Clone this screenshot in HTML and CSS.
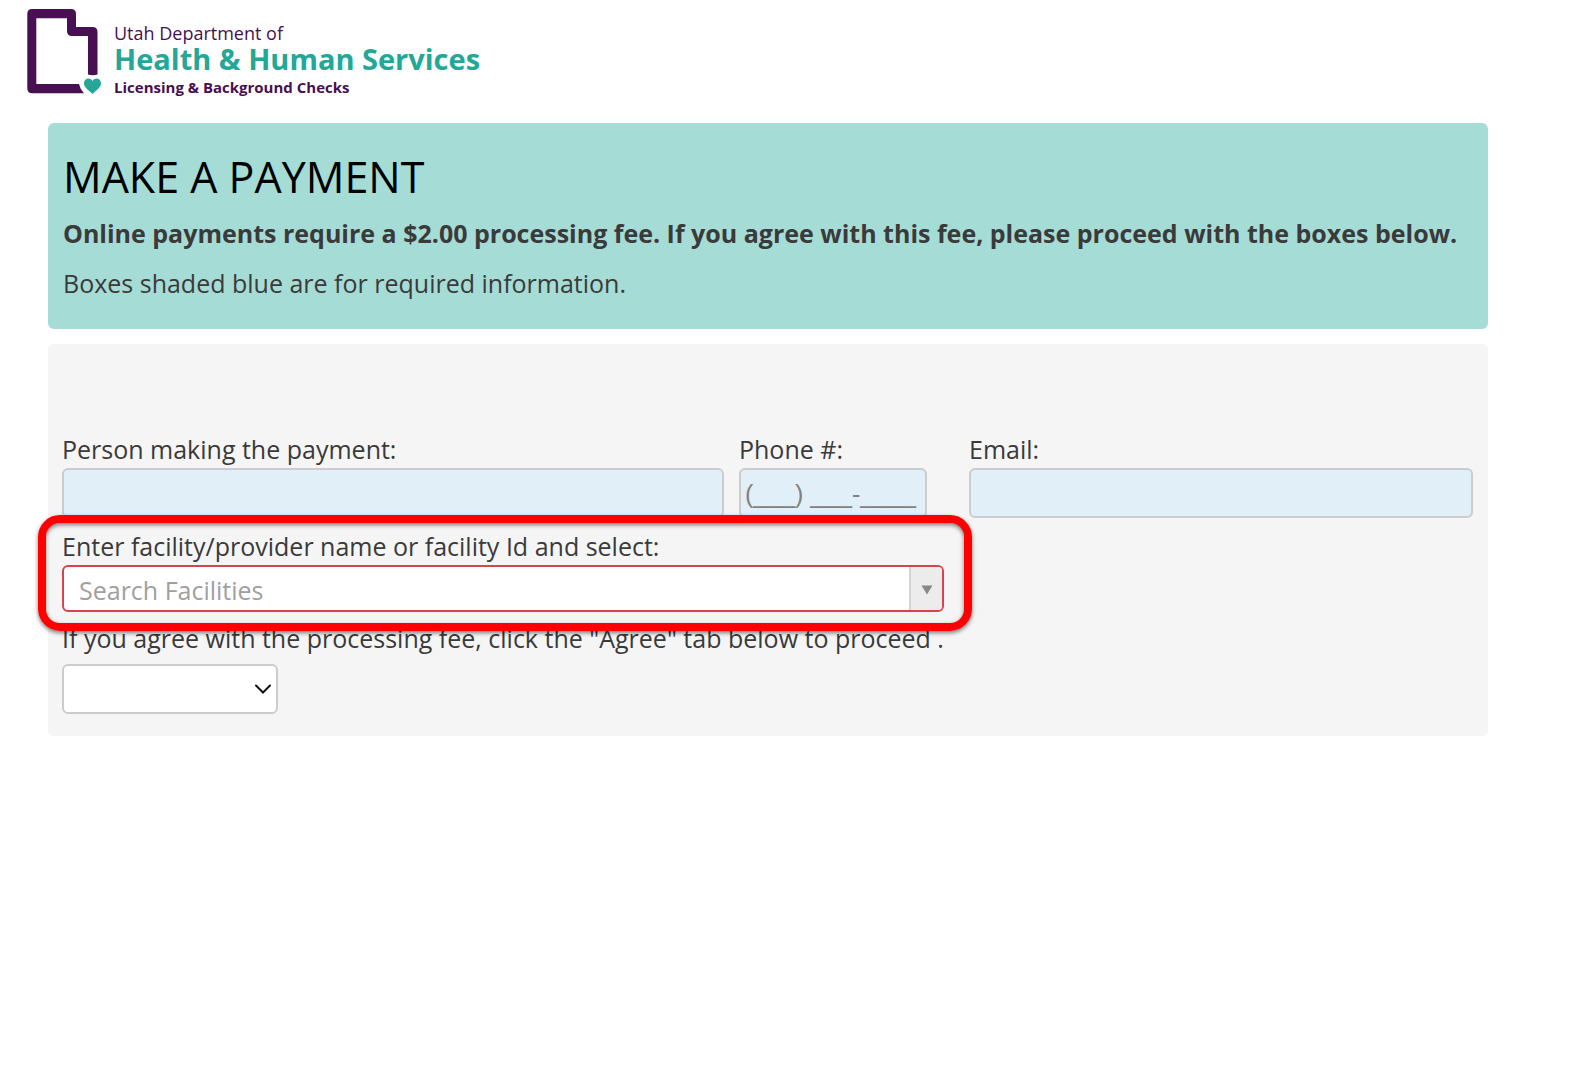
FILE: index.html
```html
<!DOCTYPE html>
<html lang="en">
<head>
<meta charset="utf-8">
<meta name="viewport" content="width=device-width, initial-scale=1">
<title>Make a Payment</title>
<link rel="stylesheet" href="styles.css">
</head>
<body>
<header class="brand">
  <svg class="brand-mark" viewBox="0 0 76 86" aria-hidden="true">
    <path class="state" d="M5 0H44Q49 0 49 5V18H65.500Q70.500 18 70.500 23V65.500Q66 67 61 65.500V27H45Q40 27 40 22V9.300H9.300V75H52Q53 80 57 84.300H5Q0.300 84.300 0.300 79V5Q0.300 0 5 0Z"/>
    <path class="heart" d="M65.500 85C61.500 81 57 78.500 57 74.500C57 69 63 68 65.500 72C68 68 74 69 74 74.500C74 78.500 69.500 81 65.500 85Z"/>
  </svg>
  <div class="brand-text">
    <span class="brand-dept">Utah Department of</span>
    <span class="brand-name">Health &amp; Human Services</span>
    <span class="brand-unit">Licensing &amp; Background Checks</span>
  </div>
</header>
<main class="page">
  <section class="banner">
    <h1 class="banner-title">MAKE A PAYMENT</h1>
    <p class="banner-fee">Online payments require a $2.00 processing fee. If you agree with this fee, please proceed with the boxes below.</p>
    <p class="banner-note">Boxes shaded blue are for required information.</p>
  </section>
  <form class="panel">
    <div class="contact">
      <div class="field field-person">
        <label for="person">Person making the payment:</label>
        <input class="control required" id="person" type="text">
      </div>
      <div class="field field-phone">
        <label for="phone">Phone #:</label>
        <input class="control required phone" id="phone" type="tel" placeholder="(___) ___-____">
      </div>
      <div class="field">
        <label for="email">Email:</label>
        <input class="control required" id="email" type="email">
      </div>
    </div>
    <div class="field field-facility">
      <label for="facility">Enter facility/provider name or facility Id and select:</label>
      <div class="combo">
        <input class="combo-input" id="facility" type="text" placeholder="Search Facilities">
        <button class="combo-button" type="button" aria-label="Show facilities">
          <svg width="12" height="10" viewBox="0 0 12 10" aria-hidden="true"><path d="M0.500 0.500H11.500L6 9.500Z"/></svg>
        </button>
      </div>
      <div class="highlight"></div>
    </div>
    <div class="field field-agree">
      <label for="agree">If you agree with the processing fee, click the "Agree" tab below to proceed .</label>
      <div class="select-wrap">
        <select class="control agree" id="agree"><option></option><option>Agree</option></select>
        <svg class="chevron" viewBox="0 0 16 10" aria-hidden="true"><path d="M1 1.500L8 8.500L15 1.500"/></svg>
      </div>
    </div>
  </form>
</main>
</body>
</html>
```

FILE: styles.css
```css
* {
  box-sizing: border-box;
}

body {
  margin: 0;
  background: #fff;
  color: #3a3a3a;
  font: 25px/34px "Open Sans", sans-serif;
}

.brand {
  display: flex;
  gap: 11px;
  padding: 9px 27px 0;
  height: 123px;
}

.brand-mark {
  width: 76px;
  height: 86px;
}

.state {
  fill: #480f52;
}

.heart {
  fill: #25a797;
}

.brand-text {
  display: flex;
  flex-direction: column;
  padding-top: 12px;
  color: #480f52;
}

.brand-dept {
  font-size: 18px;
  line-height: 24px;
}

.brand-name {
  color: #25a797;
  font-size: 29px;
  font-weight: 700;
  line-height: 28px;
}

.brand-unit {
  font-size: 15px;
  font-weight: 700;
  line-height: 28px;
}

.page {
  display: flex;
  flex-direction: column;
  gap: 15px;
  margin: 0 96px 0 48px;
}

.banner {
  padding: 31px 15px 29px;
  border-radius: 6px;
  background: #a6dcd6;
}

.banner-title {
  margin: 0;
  color: #000;
  font-size: 43px;
  font-weight: 400;
  line-height: 46px;
}

.banner-fee,
.banner-note {
  margin: 16px 0 0;
}

.banner-fee {
  font-weight: 700;
}

.panel {
  padding: 88px 15px 22px 14px;
  border-radius: 6px;
  background: #f5f5f5;
}

.contact {
  display: grid;
  grid-template-columns: 677fr 230fr 504fr;
}

.field {
  display: flex;
  flex-direction: column;
  gap: 2px;
}

.field-person {
  padding-right: 15px;
}

.field-phone {
  padding-right: 42px;
}

.control {
  width: 100%;
  height: 50px;
  padding: 0 5px;
  border: 2px solid #ccc;
  border-radius: 6px;
  background: #fff;
  color: #3a3a3a;
  font: inherit;
}

.required {
  background: #e1eff8;
}

.phone {
  padding: 2px 4px 0;
  font-family: "Liberation Sans", sans-serif;
}

.phone::placeholder {
  color: #808080;
}

.field-facility {
  position: relative;
  width: 63%;
  max-width: 882px;
  margin-top: 11px;
}

.combo {
  display: flex;
  height: 47px;
  border: 2px solid #d9434e;
  border-radius: 6px;
  background: #fff;
  overflow: hidden;
}

.combo-input {
  flex: 1;
  min-width: 0;
  padding: 3px 15px 0;
  border: 0;
  background: none;
  font: inherit;
}

.combo-input::placeholder {
  color: #a0a0a0;
}

.combo-button {
  display: flex;
  align-items: center;
  justify-content: center;
  width: 33px;
  padding: 2px 0 0;
  border: 0;
  border-left: 2px solid #d4d4d4;
  background: #ececec;
  fill: #888;
}

.highlight {
  position: absolute;
  inset: -14px -28px -19px -24px;
  border: 8px solid #f00;
  border-radius: 22px;
  box-shadow: 0 2px 4px rgba(0, 0, 0, 0.5), inset 0 2px 4px rgba(0, 0, 0, 0.5);
  pointer-events: none;
}

.field-agree {
  gap: 9px;
  margin-top: 9px;
}

.select-wrap {
  position: relative;
  width: 216px;
}

.agree {
  display: block;
  appearance: none;
}

.chevron {
  position: absolute;
  top: 20px;
  right: 7px;
  width: 16px;
  height: 10px;
  fill: none;
  stroke: #111;
  stroke-width: 2;
  stroke-linecap: round;
  pointer-events: none;
}
```
